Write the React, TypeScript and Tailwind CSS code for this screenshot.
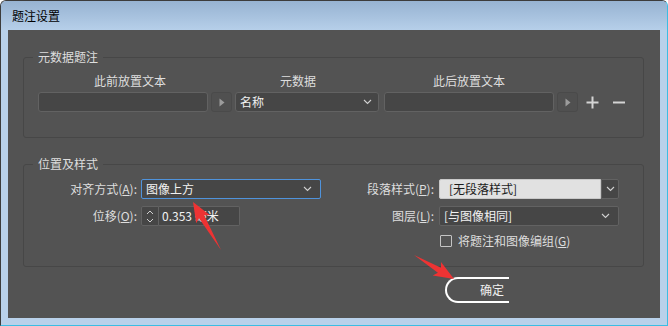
import React from "react";

// Red callout arrow drawn as a polygon: thin tail widening to a barbed head.
function arrowPoints(tx: number, ty: number, px: number, py: number, head = 17, hw = 8, sw = 3) {
  const dx = px - tx;
  const dy = py - ty;
  const len = Math.hypot(dx, dy);
  const ux = dx / len;
  const uy = dy / len;
  const nx = -uy;
  const ny = ux;
  const bx = px - ux * head;
  const by = py - uy * head;
  const cx = bx - ux * 3;
  const cy = by - uy * 3;
  const pts = [
    [tx, ty],
    [bx + nx * sw, by + ny * sw],
    [cx + nx * hw, cy + ny * hw],
    [px, py],
    [cx - nx * hw, cy - ny * hw],
    [bx - nx * sw, by - ny * sw],
  ];
  return pts.map((p) => `${p[0].toFixed(1)},${p[1].toFixed(1)}`).join(" ");
}

function Chevron() {
  return (
    <svg width="9" height="6" viewBox="0 0 9 6" className="shrink-0">
      <polyline points="1,1 4.5,4.5 8,1" fill="none" stroke="#d0d0d0" strokeWidth="1.1" />
    </svg>
  );
}

function ArrowButton() {
  return (
    <div className="w-[21px] h-[20px] shrink-0 rounded-[3px] border border-[#4a4a4a] bg-[#505050] flex items-center justify-center">
      <svg width="6" height="9" viewBox="0 0 6 9">
        <polygon points="0.5,0.5 5.5,4.5 0.5,8.5" fill="#9c9c9c" />
      </svg>
    </div>
  );
}

function Group({ title, className, children }: { title: string; className: string; children: React.ReactNode }) {
  return (
    <div className={`relative mx-[15px] mr-[16px] rounded-[3px] border border-[#474747] ${className}`}>
      <span className="absolute -top-[9px] left-[9px] bg-[#535353] px-[5px] leading-[16px] text-[#dedede]">
        {title}
      </span>
      {children}
    </div>
  );
}

export default function App() {
  return (
    <div className="relative w-[668px] h-[326px] flex flex-col overflow-hidden rounded-t-[6px] border-l border-t border-[#3c3c3c] border-r border-b border-r-[#3bbde3] border-b-[#3bbde3] bg-[#b9d1ea] font-['Noto_Sans_CJK_SC','Microsoft_YaHei',sans-serif] text-[12px]">
      {/* Title bar */}
      <div className="h-[29px] shrink-0 flex items-center pl-[11px] bg-gradient-to-b from-[#97b3d2] to-[#b6cfe9] text-black">
        题注设置
      </div>

      {/* Client area */}
      <div className="mx-[7px] h-[288px] shrink-0 bg-[#535353] flex flex-col">
        {/* 元数据题注 */}
        <Group title="元数据题注" className="mt-[27px] h-[81px]">
          <div className="pl-[14px] pt-[15px]">
            <div className="flex h-[16px] leading-[16px] text-[#dedede]">
              <div className="w-[184px] text-center">此前放置文本</div>
              <div className="w-[152px] text-center">元数据</div>
              <div className="w-[190px] text-center">此后放置文本</div>
            </div>
            <div className="mt-[3px] flex items-center h-[20px]">
              <div className="w-[170px] h-[20px] rounded-[3px] border border-[#626262] bg-[#464646]" />
              <div className="ml-[3px]">
                <ArrowButton />
              </div>
              <div className="ml-[3px] w-[144px] h-[20px] rounded-[3px] border border-[#626262] bg-[#464646] flex items-center justify-between pl-[4px] pr-[6px] text-[#f0f0f0]">
                <span className="leading-[16px]">名称</span>
                <Chevron />
              </div>
              <div className="ml-[5px] w-[170px] h-[20px] rounded-[3px] border border-[#626262] bg-[#464646]" />
              <div className="ml-[3px]">
                <ArrowButton />
              </div>
              <svg width="13" height="13" viewBox="0 0 13 13" className="ml-[8px]">
                <rect x="5.5" y="0.5" width="2" height="12" fill="#d4d4d4" />
                <rect x="0.5" y="5.5" width="12" height="2" fill="#d4d4d4" />
              </svg>
              <svg width="12" height="13" viewBox="0 0 12 13" className="ml-[14px]">
                <rect x="0" y="5.5" width="12" height="2" fill="#d4d4d4" />
              </svg>
            </div>
          </div>
        </Group>

        {/* 位置及样式 */}
        <Group title="位置及样式" className="mt-[26px] h-[103px]">
          <div className="pt-[14px] flex flex-col text-[#dedede]">
            <div className="flex items-center h-[20px]">
              <div className="w-[113px] text-right leading-[16px]">
                对齐方式(<span className="underline">A</span>):
              </div>
              <div className="ml-[4px] w-[180px] h-[20px] rounded-[2px] border border-[#4f93dc] bg-[#464646] flex items-center justify-between pl-[4px] pr-[8px] text-[#f2f2f2]">
                <span className="leading-[16px]">图像上方</span>
                <Chevron />
              </div>
              <div className="w-[113px] text-right leading-[16px]">
                段落样式(<span className="underline">P</span>):
              </div>
              <div className="ml-[5px] flex h-[20px]">
                <div className="w-[162px] h-[20px] bg-[#e1e1e1] border border-[#c9c9c9] rounded-l-[2px] flex items-center pl-[9px] text-[#1c1c1c] leading-[16px]">
                  [无段落样式]
                </div>
                <div className="w-[18px] h-[20px] bg-[#464646] border border-[#626262] rounded-r-[2px] flex items-center justify-center">
                  <Chevron />
                </div>
              </div>
            </div>

            <div className="mt-[7px] flex items-center h-[20px]">
              <div className="w-[113px] text-right leading-[16px]">
                位移(<span className="underline">O</span>):
              </div>
              <div className="ml-[4px] w-[180px] flex">
                <div className="w-[18px] h-[20px] rounded-l-[2px] border border-[#626262] bg-[#464646] flex flex-col items-center justify-center gap-[3px]">
                  <svg width="8" height="5" viewBox="0 0 8 5">
                    <polyline points="1,4 4,1 7,4" fill="none" stroke="#cfcfcf" strokeWidth="1" />
                  </svg>
                  <svg width="8" height="5" viewBox="0 0 8 5">
                    <polyline points="1,1 4,4 7,1" fill="none" stroke="#cfcfcf" strokeWidth="1" />
                  </svg>
                </div>
                <div className="w-[81px] h-[20px] rounded-r-[2px] border border-l-0 border-[#626262] bg-[#464646] flex items-center pl-[3px] text-[#f2f2f2] leading-[16px]">
                  0.353 毫米
                </div>
              </div>
              <div className="w-[113px] text-right leading-[16px]">
                图层(<span className="underline">L</span>):
              </div>
              <div className="ml-[5px] w-[180px] h-[20px] rounded-[2px] border border-[#626262] bg-[#464646] flex items-center justify-between pl-[4px] pr-[8px] text-[#f2f2f2]">
                <span className="leading-[16px]">[与图像相同]</span>
                <Chevron />
              </div>
            </div>

            <div className="mt-[5px] flex items-center h-[20px] pl-[416px]">
              <div className="w-[12px] h-[12px] border border-[#c4c4c4] rounded-[1px]" />
              <span className="ml-[6px] leading-[16px]">
                将题注和图像编组(<span className="underline">G</span>)
              </span>
            </div>
          </div>
        </Group>

        {/* OK button */}
        <div className="mt-[10px] ml-[437px] w-[64px] h-[26px] rounded-l-full border-l-2 border-t-2 border-b-2 border-white flex items-center justify-end pr-[5px] text-[#f0f0f0]">
          <span className="leading-[16px]">确定</span>
        </div>
      </div>

      {/* Annotation arrows */}
      <svg className="absolute left-0 top-0 pointer-events-none" width="668" height="326" viewBox="-1 -1 668 326">
        <polygon points={arrowPoints(219, 248, 191, 200)} fill="#ee3333" />
        <polygon points={arrowPoints(412, 253, 452, 277)} fill="#ee3333" />
      </svg>
    </div>
  );
}
